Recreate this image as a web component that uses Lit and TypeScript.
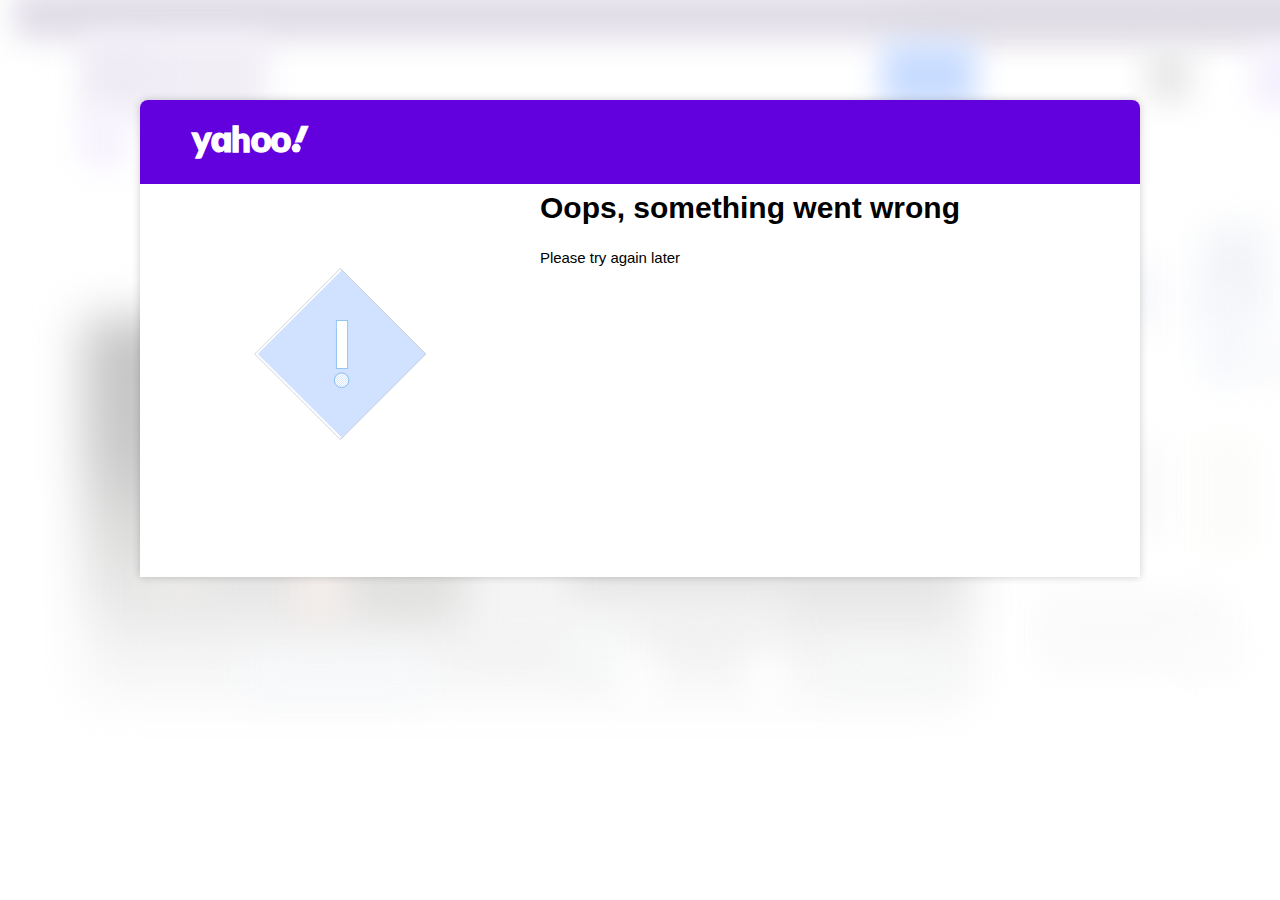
import { LitElement, html, css, svg } from "lit";
import { customElement } from "lit/decorators.js";

// x, y, width, height, colour, blur level of each softened shape behind the dialog
type Blob = [number, number, number, number, string, "s" | "m" | "l"];

const BLOBS: Blob[] = [
  [14, -10, 1330, 49, "#e0dce7", "s"],
  [900, 6, 480, 26, "#dfdbe2", "m"],
  [84, 34, 184, 84, "#f1eef6", "s"],
  [92, 48, 55, 44, "#eeebf4", "m"],
  [80, 106, 46, 62, "#f6f2fd", "s"],
  [882, 42, 94, 68, "#c8dcff", "s"],
  [1146, 44, 46, 58, "#e9e9ea", "s"],
  [1254, 46, 60, 60, "#f4effd", "s"],
  [1125, 260, 36, 68, "#f6f7fb", "m"],
  [1204, 225, 62, 95, "#f2f4f8", "m"],
  [1204, 285, 44, 95, "#f5f7fb", "m"],
  [1240, 345, 60, 30, "#f7f8fb", "m"],
  [1125, 440, 40, 100, "#fafafa", "s"],
  [1196, 438, 58, 112, "#fcfcfa", "s"],
  [1036, 592, 190, 76, "#fafafa", "m"],
  [1160, 635, 90, 34, "#fcfcfc", "m"],
];

@customElement("app-root")
export class AppRoot extends LitElement {
  static styles = css`
    :host {
      display: block;
      position: relative;
      height: 900px;
      overflow: hidden;
      background: #fff;
      font-family: "Liberation Sans", Arial, sans-serif;
      color: #000;
    }
    .backdrop {
      position: absolute;
      inset: 0;
      display: block;
    }
    .backdrop filter {
      color-interpolation-filters: sRGB;
    }
    .page {
      position: relative;
      display: flex;
      justify-content: center;
      padding-top: 100px;
    }
    .dialog {
      width: 1000px;
      height: 477px;
      background: #fff;
      border-radius: 8px 8px 0 0;
      box-shadow: 0 0 8px rgba(0, 0, 0, 0.2);
    }
    .bar {
      display: flex;
      height: 84px;
      padding-left: 50px;
      background: #6200de;
      border-radius: 8px 8px 0 0;
    }
    .logo {
      display: block;
      width: 130px;
      height: 84px;
    }
    .word {
      font-family: Lato, sans-serif;
      font-weight: 900;
      font-size: 36px;
      fill: #fff;
      stroke: #fff;
      stroke-width: 1.5;
    }
    .tall {
      font-size: 34.4px;
    }
    .round {
      font-family: Inter, sans-serif;
      font-weight: 800;
      font-size: 34.5px;
      font-feature-settings: "cv11";
      stroke-width: 0.9;
    }
    .bang {
      font-family: Inter, sans-serif;
      font-weight: 800;
      font-size: 37px;
      fill: #fff;
      stroke: #fff;
      stroke-width: 0.9;
    }
    .body {
      display: grid;
      grid-template-columns: 400px 1fr;
    }
    .art {
      display: block;
      width: 400px;
      height: 340px;
    }
    h1 {
      margin: 7px 0 0;
      font-size: 30px;
      line-height: 34px;
      font-weight: 700;
    }
    p {
      margin: 24px 0 0;
      font-size: 15px;
      line-height: 17px;
      letter-spacing: -0.04px;
    }
  `;

  private backdrop() {
    return html`<svg class="backdrop" width="1280" height="900" viewBox="0 0 1280 900" aria-hidden="true">
      <defs>
        <filter id="s" filterUnits="userSpaceOnUse" x="-100" y="-100" width="1500" height="1100">
          <feGaussianBlur stdDeviation="15" />
        </filter>
        <filter id="m" filterUnits="userSpaceOnUse" x="-100" y="-100" width="1500" height="1100">
          <feGaussianBlur stdDeviation="18" />
        </filter>
        <filter id="l" filterUnits="userSpaceOnUse" x="-100" y="-100" width="1500" height="1100">
          <feGaussianBlur stdDeviation="24" />
        </filter>
        <linearGradient id="photo" gradientUnits="userSpaceOnUse" x1="0" y1="300" x2="0" y2="710">
          <stop offset="0" stop-color="#c4c4c4" />
          <stop offset="0.36" stop-color="#c8c8c8" />
          <stop offset="0.6" stop-color="#e0e0df" />
          <stop offset="0.72" stop-color="#e7e7e7" />
          <stop offset="0.82" stop-color="#f2f2f2" />
          <stop offset="0.9" stop-color="#f6f6f6" />
          <stop offset="1" stop-color="#f9f9f9" />
        </linearGradient>
      </defs>
      <rect x="84" y="318" width="888" height="384" fill="url(#photo)" filter="url(#l)" />
      <g filter="url(#m)">
        <rect x="140" y="570" width="70" height="40" fill="#ecebea" />
        <rect x="300" y="550" width="38" height="70" fill="#f8efec" />
        <rect x="360" y="550" width="90" height="62" fill="#e1e1df" />
        <rect x="470" y="540" width="100" height="110" fill="#f4f4f4" />
        <rect x="570" y="600" width="220" height="40" fill="#f2f2f2" />
        <rect x="240" y="660" width="190" height="34" fill="#f7f9fc" />
        <rect x="560" y="620" width="70" height="60" fill="#f6f7f7" />
        <rect x="620" y="650" width="36" height="60" fill="#fff" />
        <rect x="750" y="650" width="36" height="60" fill="#fff" />
        <rect x="820" y="650" width="140" height="44" fill="#f6f7f7" />
      </g>
      ${BLOBS.map(
        ([x, y, w, h, c, b]) => svg`<rect x=${x} y=${y} width=${w} height=${h} rx="6" fill=${c} filter="url(#${b})" />`
      )}
    </svg>`;
  }

  private logo() {
    return html`<svg class="logo" viewBox="190 100 130 84" role="img" aria-label="yahoo!">
      <defs>
        <clipPath id="stroke"><rect x="285" y="120" width="30" height="22.6" /></clipPath>
      </defs>
      <text class="word" x="192 210.6 231.2 250.7 270.5" y="152"
        >y<tspan class="round">a</tspan><tspan class="tall">h</tspan>oo</text>
      <g clip-path="url(#stroke)">
        <text class="bang" transform="translate(287.2 152.6) skewX(-22)">!</text>
      </g>
      <circle cx="296.2" cy="148.1" r="4.5" fill="#fff" />
    </svg>`;
  }

  private warning() {
    return html`<svg class="art" viewBox="140 184 400 340" aria-hidden="true">
      <defs>
        <pattern id="dots" width="2" height="2" patternUnits="userSpaceOnUse">
          <rect width="2" height="2" fill="#fff" />
          <rect width="1" height="1" fill="#d6e8ff" />
          <rect x="1" y="1" width="1" height="1" fill="#d6e8ff" />
        </pattern>
      </defs>
      <path d="M340.3 268.5 254.7 354l85.6 85.5L425.8 354Z" fill="#fff" stroke="#c5c9d1" stroke-width=".8" />
      <path d="M341.7 270.2 257.8 354l83.9 83.5L425.4 354Z" fill="#d0e2ff" />
      <path d="M340.3 268.5 425.6 354l-85.3 85.5" fill="none" stroke="#bdcbe2" stroke-width=".7" />
      <rect x="336.4" y="320.5" width="11.2" height="48" fill="#fff" stroke="#8dc1f2" stroke-width=".9" />
      <circle cx="341.6" cy="380.2" r="7.3" fill="url(#dots)" stroke="#80b9f1" stroke-width=".9" />
    </svg>`;
  }

  render() {
    return html`
      ${this.backdrop()}
      <div class="page">
        <main class="dialog">
          <header class="bar">${this.logo()}</header>
          <section class="body">
            ${this.warning()}
            <div>
              <h1>Oops, something went wrong</h1>
              <p>Please try again later</p>
            </div>
          </section>
        </main>
      </div>
    `;
  }
}
